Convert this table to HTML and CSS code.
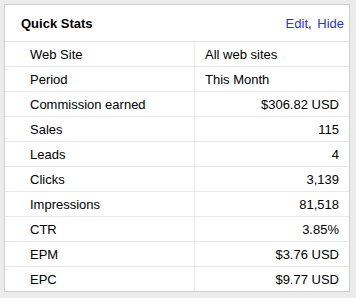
FILE: index.html
```html
<!DOCTYPE html>
<html lang="en">
<head>
    <meta charset="UTF-8">
    <title>Quick Stats</title>
    <link rel="stylesheet" href="styles.css">
</head>
<body>
    <div class="panel">
        <div class="panel-head">
            <span class="panel-title">Quick Stats</span>
            <span class="panel-links"><a href="#">Edit</a>, <a href="#">Hide</a></span>
        </div>
        <table class="stats">
            <tr><td>Web Site</td><td class="left">All web sites</td></tr>
            <tr><td>Period</td><td class="left">This Month</td></tr>
            <tr><td>Commission earned</td><td>$306.82 USD</td></tr>
            <tr><td>Sales</td><td>115</td></tr>
            <tr><td>Leads</td><td>4</td></tr>
            <tr><td>Clicks</td><td>3,139</td></tr>
            <tr><td>Impressions</td><td>81,518</td></tr>
            <tr><td>CTR</td><td>3.85%</td></tr>
            <tr><td>EPM</td><td>$3.76 USD</td></tr>
            <tr><td>EPC</td><td>$9.77 USD</td></tr>
        </table>
    </div>
</body>
</html>
```

FILE: styles.css
```css
body {
    margin: 0;
    padding: 4px;
    background-color: #ececec;
    font-family: "Liberation Sans", Arial, sans-serif;
    font-size: 13px;
    color: #000;
}
.panel {
    width: 344px;
    background: #fff;
    border: 1px solid #cfcfcf;
}
.panel-head {
    display: flex;
    justify-content: space-between;
    align-items: center;
    height: 36px;
    padding: 0 5px 0 16px;
    border-bottom: 1px solid #e3e3e3;
}
.panel-title {
    font-weight: bold;
}
.panel-links a {
    color: #2b35d6;
    text-decoration: none;
    margin-left: 2px;
}
.stats {
    width: 100%;
    border-collapse: collapse;
}
.stats td {
    height: 24px;
    padding: 0 10px 0 25px;
    border-bottom: 1px solid #e8e8e8;
    text-align: left;
}
.stats td + td {
    width: 134px;
    padding: 0 10px;
    text-align: right;
    border-left: 1px solid #e8e8e8;
}
.stats td.left {
    text-align: left;
}
.stats tr:last-child td {
    border-bottom: none;
}
```
